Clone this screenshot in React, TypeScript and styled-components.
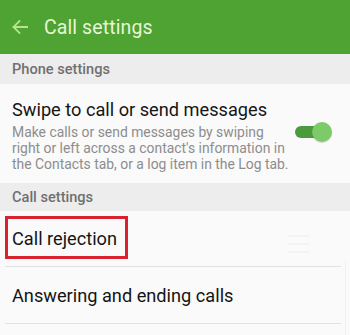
import React from "react";
import styled, { createGlobalStyle } from "styled-components";

const Global = createGlobalStyle`
  html, body { margin: 0; padding: 0; background: #fafafa; }
  body { font-family: Roboto, "Noto Sans", sans-serif; width: 350px; height: 335px; overflow: hidden; }
`;

const Screen = styled.div`
  width: 350px;
  height: 335px;
  background: #fafafa;
  position: relative;
  overflow: hidden;
`;

const Header = styled.header`
  height: 54px;
  background: #4fa332;
  display: flex;
  align-items: center;
  padding-left: 12px;
  gap: 16px;
  box-sizing: border-box;
`;

const Title = styled.h1`
  margin: 0;
  font-size: 19.5px;
  font-weight: 400;
  color: #e6f6d6;
  letter-spacing: 0.1px;
`;

const SectionBand = styled.div<{ $h: number }>`
  height: ${(p) => p.$h}px;
  background: #ededed;
  display: flex;
  align-items: center;
  padding-left: 12px;
  font-size: 14.6px;
  font-weight: 500;
  color: #707070;
`;

const SwitchItem = styled.div`
  height: 99px;
  display: flex;
  align-items: center;
  padding: 4px 18px 0 12px;
  gap: 12px;
  box-sizing: border-box;
`;

const ItemText = styled.div`
  flex: 1;
  display: flex;
  flex-direction: column;
  gap: 3px;
  min-width: 0;
`;

const ItemTitle = styled.div`
  font-size: 18.2px;
  color: #151515;
  line-height: 22px;
  white-space: nowrap;
`;

const ItemDesc = styled.div`
  font-size: 13.9px;
  line-height: 16px;
  color: #8d8d8d;
  white-space: nowrap;
`;

const Toggle = styled.div`
  position: relative;
  width: 37px;
  height: 20px;
  flex: none;
  margin-top: -8px;
`;

const Track = styled.div`
  position: absolute;
  left: 0;
  top: 4px;
  width: 30px;
  height: 12px;
  border-radius: 6px;
  background: #4b9a3b;
`;

const Thumb = styled.div`
  position: absolute;
  right: 0;
  top: 0;
  width: 20px;
  height: 20px;
  border-radius: 50%;
  background: #7ccb68;
  box-shadow: 0 1px 1px rgba(0, 0, 0, 0.15);
`;

const Row = styled.div<{ $h: number }>`
  height: ${(p) => p.$h}px;
  margin: 0 9px 0 5px;
  padding-left: 7px;
  display: flex;
  align-items: center;
  border-bottom: 1px solid #e2e2e2;
  font-size: 18.2px;
  color: #151515;
  position: relative;
`;

const Highlighted = styled.span`
  position: relative;
  &::after {
    content: "";
    position: absolute;
    left: -7px;
    right: -11px;
    top: -12px;
    bottom: -10px;
    border: 3px solid #d8232f;
  }
`;

const Ghost = styled.div`
  position: absolute;
  right: 32px;
  top: 24px;
  width: 22px;
  display: flex;
  flex-direction: column;
  gap: 6px;
  & > span {
    height: 2px;
    background: #f4f4f4;
  }
`;

const ScrollEdge = styled.div`
  position: absolute;
  right: 4px;
  top: 260px;
  width: 1px;
  height: 75px;
  background: #f0f0f0;
`;

export default function App() {
  return (
    <Screen>
      <Global />
      <Header>
        <svg width="16" height="14" viewBox="0 0 16 14" fill="none">
          <path d="M15.5 7H1.5M7.5 1L1.5 7l6 6" stroke="#b4e68c" strokeWidth="1.8" strokeLinecap="square" />
        </svg>
        <Title>Call settings</Title>
      </Header>
      <SectionBand $h={30}>Phone settings</SectionBand>
      <SwitchItem>
        <ItemText>
          <ItemTitle>Swipe to call or send messages</ItemTitle>
          <ItemDesc>
            Make calls or send messages by swiping
            <br />
            right or left across a contact's information in
            <br />
            the Contacts tab, or a log item in the Log tab.
          </ItemDesc>
        </ItemText>
        <Toggle>
          <Track />
          <Thumb />
        </Toggle>
      </SwitchItem>
      <SectionBand $h={28}>Call settings</SectionBand>
      <Row $h={55}>
        <Highlighted>Call rejection</Highlighted>
        <Ghost>
          <span />
          <span />
          <span />
        </Ghost>
      </Row>
      <Row $h={56}>Answering and ending calls</Row>
      <ScrollEdge />
    </Screen>
  );
}
